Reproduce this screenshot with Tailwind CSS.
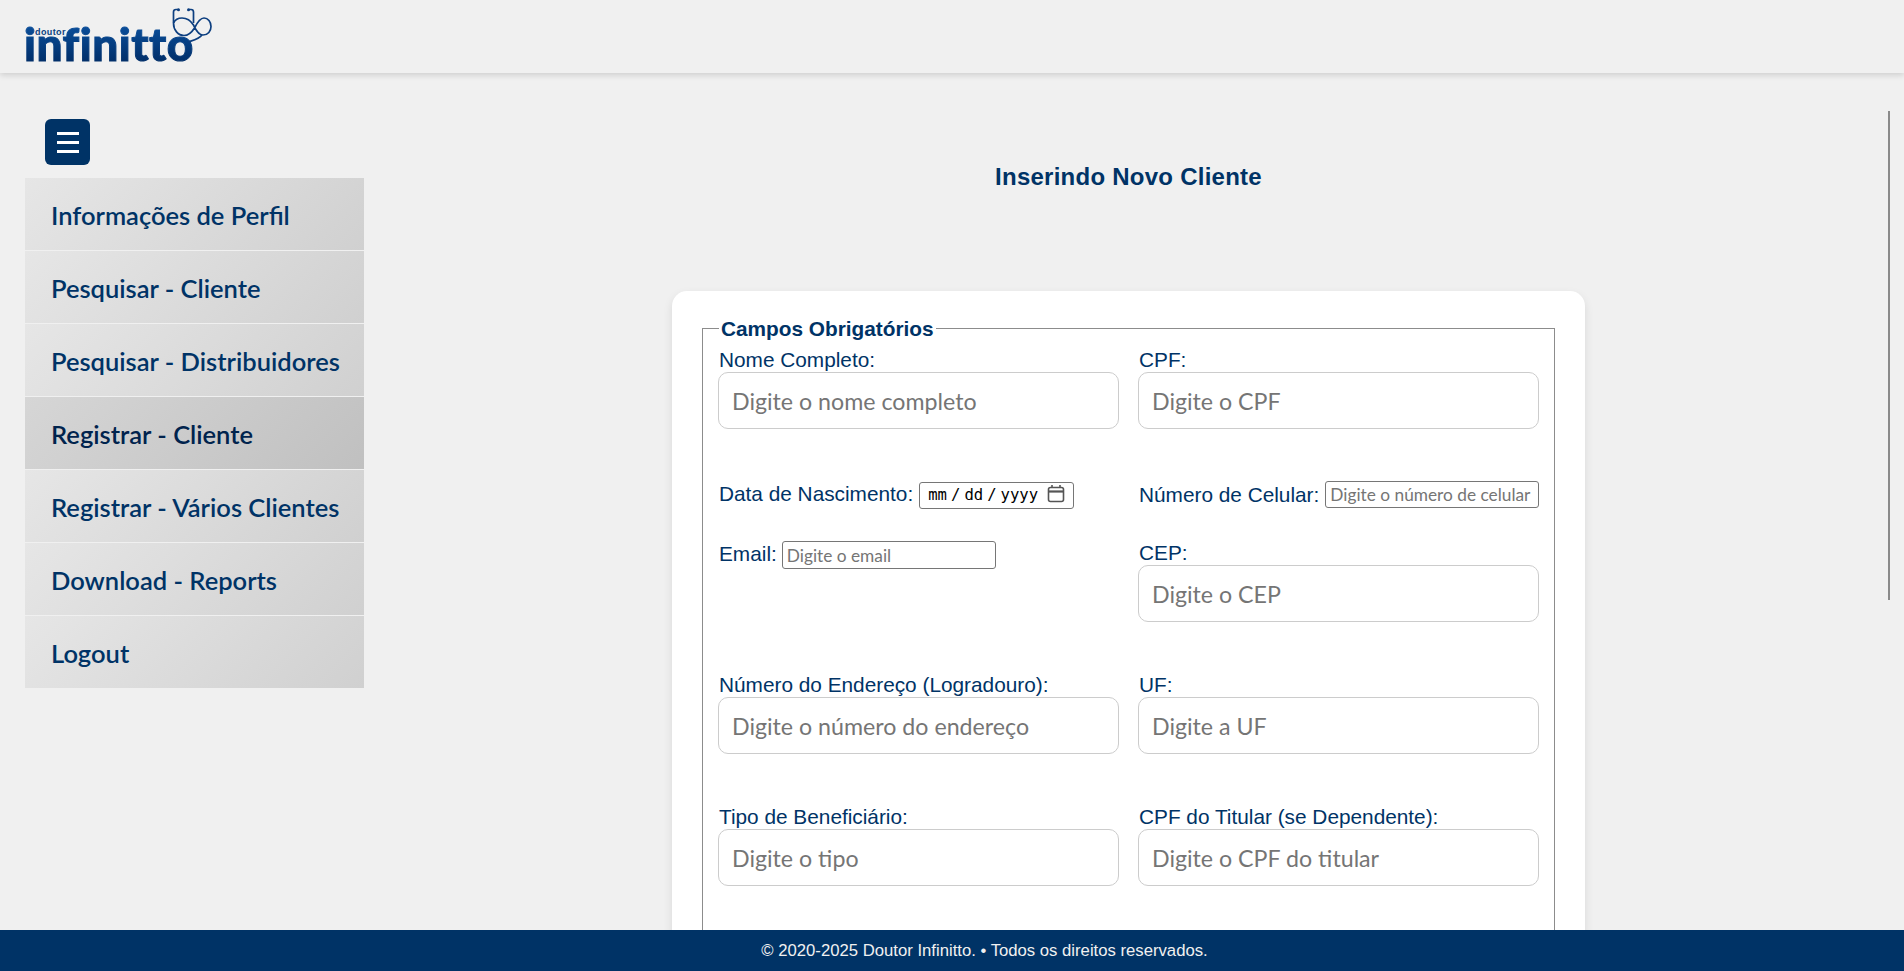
<!doctype html>
<html lang="pt-BR">
<head>
<meta charset="UTF-8" />
<title>Inserindo Novo Cliente</title>
<script src="https://cdn.jsdelivr.net/npm/@tailwindcss/browser@4"></script>
</head>
<body class="h-screen overflow-hidden bg-[#f0f0f0] font-['Liberation_Sans',sans-serif] text-[#003366]">
    <!-- Header -->
    <header class="h-[73px] bg-[#f0f0f0] shadow-[0_2px_6px_rgba(0,0,0,0.15)] pl-[25px] pt-[7px] relative">
        <div class="relative w-[190px] h-[56px]">
            <span class="absolute left-[-1px] top-[9px] text-[46px] leading-[56px] font-black tracking-[0.5px] font-['Lato',sans-serif] [-webkit-text-stroke:1px_transparent] bg-gradient-to-b from-[#0f57a8] to-[#00265c] bg-clip-text text-transparent">infinitto</span>
            <span class="absolute left-[10px] top-[20px] text-[9px] leading-[10px] font-bold text-[#0b3f80] tracking-[0.4px]">doutor</span>
            <svg class="absolute left-[147px] top-[1px]" width="42" height="36" viewBox="0 0 42 36" fill="none" stroke="#0d3f80" stroke-width="1.7">
                <path d="M6.5 1.5 H4 Q1.5 1.5 1.5 4 V15"/>
                <path d="M16.5 1.5 H19 Q21.5 1.5 21.5 4 V15"/>
                <path d="M1.5 15 C1.5 22 6 27.5 12 27.5 C17 27.5 20 24 22.5 20 C25 15 28 10 32 10 C36 10 39 14 39 18.5 C39 23 36 27 31 27 C26 27 23.5 21 21.5 17 C19 13 15 10 10 10 C6 10 3 12 1.5 15"/>
                <path d="M30 27 C27 31 22 32 16 34"/>
                <circle cx="6.5" cy="1.8" r="1.5" fill="#0d3f80" stroke="none"/>
                <circle cx="16.5" cy="1.8" r="1.5" fill="#0d3f80" stroke="none"/>
            </svg>
        </div>
    </header>

    <div class="flex">
        <!-- Sidebar -->
        <aside class="w-[364px] shrink-0 pl-[25px] pt-[46px]">
            <button class="ml-[20px] w-[45px] h-[46px] rounded-[6px] bg-[#003366] flex flex-col items-center justify-center gap-[6px]">
                <span class="block w-[22px] h-[3px] bg-white"></span>
                <span class="block w-[22px] h-[3px] bg-white"></span>
                <span class="block w-[22px] h-[3px] bg-white"></span>
            </button>
            <nav class="mt-[13px] flex flex-col gap-[1px] font-['Lato',sans-serif] text-[25.5px] font-semibold">
                <a class="h-[72px] pl-[26px] pt-[2px] flex items-center bg-[linear-gradient(135deg,#e6e6e6,#d0d0d0)]">Informações de Perfil</a>
                <a class="h-[72px] pl-[26px] pt-[2px] flex items-center bg-[linear-gradient(135deg,#e6e6e6,#d0d0d0)]">Pesquisar - Cliente</a>
                <a class="h-[72px] pl-[26px] pt-[2px] flex items-center bg-[linear-gradient(135deg,#e6e6e6,#d0d0d0)]">Pesquisar - Distribuidores</a>
                <a class="h-[72px] pl-[26px] pt-[2px] flex items-center bg-[linear-gradient(135deg,#d6d6d6,#c0c0c0)] text-[#00234d]">Registrar - Cliente</a>
                <a class="h-[72px] pl-[26px] pt-[2px] flex items-center bg-[linear-gradient(135deg,#e6e6e6,#d0d0d0)]">Registrar - Vários Clientes</a>
                <a class="h-[72px] pl-[26px] pt-[2px] flex items-center bg-[linear-gradient(135deg,#e6e6e6,#d0d0d0)]">Download - Reports</a>
                <a class="h-[72px] pl-[26px] pt-[2px] flex items-center bg-[linear-gradient(135deg,#e6e6e6,#d0d0d0)]">Logout</a>
            </nav>
        </aside>

        <!-- Main -->
        <main class="flex-1 pl-[308px] pr-[319px] pt-[90px]">
            <h1 class="text-[24px] leading-[28px] font-bold text-center tracking-[0.25px]">Inserindo Novo Cliente</h1>
            <div class="mt-[100px] bg-white rounded-[15px] shadow-[0_4px_10px_rgba(0,0,0,0.1)] px-[30px] pt-[26px] pb-[30px]">
                <fieldset class="border border-[#8c8c8c] px-[15px] pb-[20px]">
                    <legend class="ml-[1px] px-[2px] text-[20.8px] leading-[23px] font-bold">Campos Obrigatórios</legend>
                    <div class="mt-[8px] grid grid-cols-2 gap-x-[19px] text-[20.8px] leading-[24px]">
                        <div class="h-[133px]">
                            <label class="block pl-[1px]">Nome Completo:</label>
                            <input class="w-full h-[57px] rounded-[10px] border border-[#cccccc] px-[13px] text-[23.2px] font-['Lato',sans-serif] placeholder:text-[#757575]" placeholder="Digite o nome completo" />
                        </div>
                        <div class="h-[133px]">
                            <label class="block pl-[1px]">CPF:</label>
                            <input class="w-full h-[57px] rounded-[10px] border border-[#cccccc] px-[13px] text-[23.2px] font-['Lato',sans-serif] placeholder:text-[#757575]" placeholder="Digite o CPF" />
                        </div>
                        <div class="h-[60px] flex items-start gap-[6px]">
                            <label class="pl-[1px] whitespace-nowrap leading-[26px]">Data de Nascimento:</label>
                            <div class="relative">
                                <input type="date" class="w-[155px] h-[27px] rounded-[3px] border border-[#767676] pl-[7px] text-[15.6px] text-black font-['DejaVu_Sans_Mono',monospace] [&::-webkit-datetime-edit-text]:px-[3px] [&::-webkit-calendar-picker-indicator]:opacity-0" />
                                <svg class="absolute right-[9px] top-[3px] pointer-events-none" width="18" height="20" viewBox="0 0 18 20" fill="none" stroke="#555555" stroke-width="1.6">
                                    <rect x="1.5" y="3.5" width="15" height="14" rx="2"/>
                                    <path d="M1.5 7.5 H16.5" stroke-width="2.2"/>
                                    <path d="M5 1 V4 M13 1 V4"/>
                                </svg>
                            </div>
                        </div>
                        <div class="h-[60px] flex items-start gap-[6px]">
                            <label class="pl-[1px] whitespace-nowrap leading-[28px]">Número de Celular:</label>
                            <input class="flex-1 min-w-0 h-[27px] rounded-[3px] border border-[#767676] px-[4px] text-[17.3px] font-['Lato',sans-serif] placeholder:text-[#757575]" placeholder="Digite o número de celular" />
                        </div>
                        <div class="h-[132px] flex items-start gap-[5px]">
                            <label class="pl-[1px] whitespace-nowrap leading-[26px]">Email:</label>
                            <input class="w-[214px] h-[28px] rounded-[3px] border border-[#767676] px-[4px] text-[17.3px] font-['Lato',sans-serif] placeholder:text-[#757575]" placeholder="Digite o email" />
                        </div>
                        <div class="h-[132px]">
                            <label class="block pl-[1px]">CEP:</label>
                            <input class="w-full h-[57px] rounded-[10px] border border-[#cccccc] px-[13px] text-[23.2px] font-['Lato',sans-serif] placeholder:text-[#757575]" placeholder="Digite o CEP" />
                        </div>
                        <div class="h-[132px]">
                            <label class="block pl-[1px]">Número do Endereço (Logradouro):</label>
                            <input class="w-full h-[57px] rounded-[10px] border border-[#cccccc] px-[13px] text-[23.2px] font-['Lato',sans-serif] placeholder:text-[#757575]" placeholder="Digite o número do endereço" />
                        </div>
                        <div class="h-[132px]">
                            <label class="block pl-[1px]">UF:</label>
                            <input class="w-full h-[57px] rounded-[10px] border border-[#cccccc] px-[13px] text-[23.2px] font-['Lato',sans-serif] placeholder:text-[#757575]" placeholder="Digite a UF" />
                        </div>
                        <div class="h-[132px]">
                            <label class="block pl-[1px]">Tipo de Beneficiário:</label>
                            <input class="w-full h-[57px] rounded-[10px] border border-[#cccccc] px-[13px] text-[23.2px] font-['Lato',sans-serif] placeholder:text-[#757575]" placeholder="Digite o tipo" />
                        </div>
                        <div class="h-[132px]">
                            <label class="block pl-[1px]">CPF do Titular (se Dependente):</label>
                            <input class="w-full h-[57px] rounded-[10px] border border-[#cccccc] px-[13px] text-[23.2px] font-['Lato',sans-serif] placeholder:text-[#757575]" placeholder="Digite o CPF do titular" />
                        </div>
                    </div>
                </fieldset>
            </div>
        </main>
    </div>

    <!-- Scrollbar thumb of the inner area -->
    <div class="fixed right-[14px] top-[111px] w-[2px] h-[489px] bg-[#8a8a8a]"></div>

    <footer class="fixed bottom-0 left-0 right-0 h-[41px] pl-[65px] bg-[#003366] text-[#f0f0f0] text-[16.7px] flex items-center justify-center">© 2020-2025 Doutor Infinitto. • Todos os direitos reservados.</footer>
</body>
</html>
